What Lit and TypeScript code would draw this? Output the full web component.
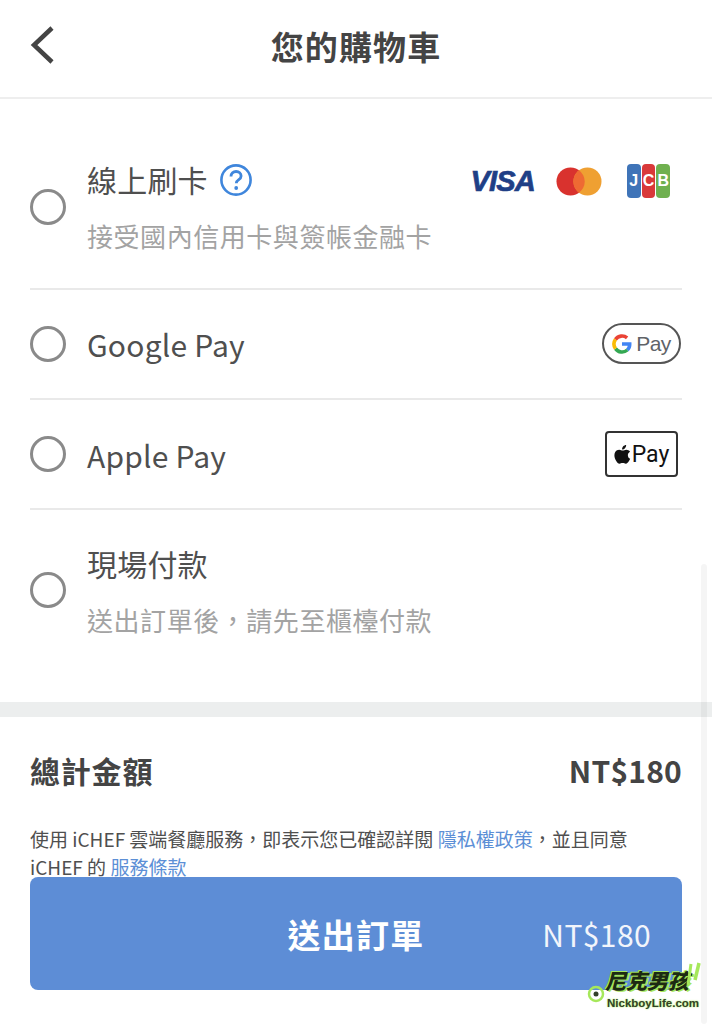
import { LitElement, html, css } from "lit";
import { customElement } from "lit/decorators.js";

const help = html`<svg class="help" width="34" height="34" viewBox="0 0 34 34" fill="none">
  <circle cx="17" cy="17" r="14.6" stroke="#3f86dc" stroke-width="2.6"/>
  <path d="M12 13.4c0-3 2.3-4.9 5.1-4.9 2.9 0 5 1.8 5 4.4 0 2-1.1 3-2.6 4-1.4.9-2.2 1.600-2.200 3.400" stroke="#3f86dc" stroke-width="2.800"/>
  <circle cx="17.200" cy="25" r="1.900" fill="#3f86dc"/>
</svg>`;

const cards = html`<div class="cards">
  <span class="visa">VISA</span>
  <svg class="mc" width="46" height="29" viewBox="0 0 46 29">
    <circle cx="14.500" cy="14.500" r="14" fill="#d9322e"/>
    <circle cx="31.500" cy="14.500" r="14" fill="#efa032"/>
    <path d="M23 3.200a14 14 0 0 1 0 22.600a14 14 0 0 1 0-22.600z" fill="#ee6a33"/>
  </svg>
  <div class="jcb">
    <span class="j">J</span><span class="c">C</span><span class="b">B</span>
  </div>
</div>`;

const gpay = html`<div class="gpay">
  <svg width="20" height="20" viewBox="0 0 20 20" fill="none" stroke-width="3.600">
    <path d="M10 10h7.700a8 8 0 0 1-2.400 6" stroke="#4285f4"/>
    <path d="M15.300 16a8 8 0 0 1-11.800-1.400" stroke="#34a853"/>
    <path d="M3.500 14.600a8 8 0 0 1 0-9.200" stroke="#fbbc05"/>
    <path d="M3.500 5.400a8 8 0 0 1 11.600-1.500" stroke="#ea4335"/>
  </svg>
  <span>Pay</span>
</div>`;

const apay = html`<div class="apay">
  <svg width="17" height="20" viewBox="0 0 18 22" fill="#111">
    <path d="M13 1c.1 1.500-.5 2.700-1.300 3.600-.8.900-2 1.500-3.100 1.400C8.400 4.600 9 3.300 9.800 2.500 10.600 1.600 12 1 13 1z"/>
    <path d="M17.400 16.200c-.5 1.100-.7 1.600-1.300 2.500-.9 1.300-2 2.900-3.500 3-1.300 0-1.700-.8-3.400-.8-1.800 0-2.200.8-3.500.8-1.500-.1-2.500-1.500-3.400-2.800C-.2 15.300-.5 11 1 8.800 2 7.200 3.700 6.300 5.300 6.300c1.600 0 2.700.9 4 .9 1.300 0 2.100-.9 4-.9 1.400 0 3 .8 4 2.100-3.500 1.900-2.900 6.800.1 7.800z"/>
  </svg>
  <span>Pay</span>
</div>`;

@customElement("app-root")
export class AppRoot extends LitElement {
  static styles = css`
    :host {
      display: block;
      position: relative;
      width: 712px;
      height: 1024px;
      overflow: hidden;
      background: #fff;
      color: #4a4a4a;
      font-family: "Noto Sans CJK TC", "Noto Sans", sans-serif;
    }
    .header {
      height: 99px;
      box-sizing: border-box;
      border-bottom: 2px solid #eeeeee;
      display: flex;
      align-items: center;
      justify-content: center;
      position: relative;
      padding-bottom: 5px;
    }
    .back {
      position: absolute;
      left: 29px;
      top: 25px;
    }
    .title {
      font-size: 33px;
      font-weight: 700;
      line-height: 40px;
      letter-spacing: 1.100px;
      color: #444;
    }
    .list {
      padding: 0 30px;
    }
    .row {
      display: flex;
      align-items: center;
      border-bottom: 2px solid #e9e9e9;
      box-sizing: border-box;
    }
    .row.last { border-bottom: none; }
    .r1 { height: 191px; padding-top: 26px; }
    .r2, .r3 { height: 110px; }
    .r4 { height: 192px; padding-bottom: 32px; }
    .radio {
      width: 36px;
      height: 36px;
      box-sizing: border-box;
      border: 3.500px solid #8a8a8a;
      border-radius: 50%;
      flex: none;
      margin-right: 21px;
    }
    .body { flex: 1; min-width: 0; }
    .name {
      font-size: 30px;
      line-height: 40px;
      letter-spacing: 0.2px;
      color: #4f4f4f;
      display: flex;
      align-items: center;
      gap: 11px;
    }
    .r3 .name { margin-top: 1px; }
    .sub {
      font-size: 26px;
      line-height: 36px;
      margin-top: 19px;
      letter-spacing: 0.55px;
      color: #a3a3a3;
    }
    .help { flex: none; margin-top: 2px; }
    .cards {
      display: flex;
      align-items: center;
      align-self: flex-start;
      margin-top: 39px;
      margin-right: 12px;
    }
    .visa {
      font-family: "Liberation Sans", sans-serif;
      font-size: 29px;
      font-weight: 700;
      font-style: italic;
      letter-spacing: -0.8px;
      line-height: 30px;
      color: #1f3f86;
      -webkit-text-stroke: 0.7px #1f3f86;
    }
    .mc { margin-left: 21px; }
    .jcb {
      display: flex;
      gap: 1px;
      height: 34px;
      margin-left: 25px;
    }
    .jcb span {
      width: 13.700px;
      border-radius: 4px;
      color: #fff;
      font-family: "Liberation Sans", sans-serif;
      font-size: 16px;
      font-weight: 700;
      line-height: 34px;
      text-align: center;
    }
    .j { background: #3f74b8; }
    .c { background: #d9393a; }
    .b { background: #6fb04f; }
    .gpay {
      width: 79px;
      height: 41px;
      box-sizing: border-box;
      border: 2px solid #555;
      border-radius: 21px;
      display: flex;
      align-items: center;
      justify-content: center;
      gap: 4px;
      margin-right: 1px;
      margin-top: -1px;
      font-family: "Liberation Sans", sans-serif;
      font-size: 21px;
      letter-spacing: -0.5px;
      color: #5f6368;
    }
    .apay {
      width: 73px;
      height: 46px;
      box-sizing: border-box;
      border: 2px solid #333;
      border-radius: 4px;
      display: flex;
      align-items: center;
      justify-content: center;
      gap: 1px;
      margin-right: 4px;
      font-family: Roboto, sans-serif;
      font-weight: 400;
      font-size: 23px;
      color: #111;
    }
    .band {
      height: 15px;
      background: #eceeee;
    }
    .summary {
      padding: 0 30px;
    }
    .total {
      display: flex;
      justify-content: space-between;
      align-items: center;
      height: 40px;
      margin-top: 33px;
      font-size: 30px;
      font-weight: 700;
      color: #444;
      letter-spacing: 0.8px;
    }
    .amount { letter-spacing: 0.2px; }
    .terms {
      height: 52px;
      margin-top: 35px;
      font-size: 19px;
      line-height: 28px;
      color: #4f4f4f;
    }
    .terms a { color: #5c8fd6; text-decoration: none; }
    .submit {
      height: 113px;
      border-radius: 8px;
      background: #5d8dd6;
      color: #fff;
      display: grid;
      grid-template-columns: 1fr auto 1fr;
      align-items: center;
      padding: 0 31px;
      position: relative;
    }
    .submit b {
      grid-column: 2;
      font-size: 33px;
      font-weight: 700;
      letter-spacing: 1.300px;
    }
    .submit span {
      grid-column: 3;
      justify-self: end;
      font-size: 30px;
      letter-spacing: 0.4px;
      color: #f2f5fb;
    }
    .scroll {
      position: absolute;
      right: 5px;
      top: 564px;
      bottom: 0;
      width: 6px;
      border-radius: 3px;
      background: rgba(0, 0, 0, 0.04);
    }
    .mark {
      position: absolute;
      left: 586px;
      top: 962px;
      width: 120px;
      height: 50px;
    }
    .mark .cn {
      position: absolute;
      left: 19px;
      top: 5px;
      font-size: 21px;
      line-height: 26px;
      font-weight: 900;
      font-style: italic;
      color: #1c2a12;
      text-shadow: 2px 1px 0 #a6e85a, -1px -1px 0 #a6e85a;
      white-space: nowrap;
    }
    .mark .en {
      position: absolute;
      left: 21px;
      top: 35px;
      font-family: "Liberation Sans", sans-serif;
      font-size: 11.500px;
      line-height: 13px;
      font-weight: 700;
      color: #33412a;
      text-shadow: 0 0 2px #b6ee70, 0 0 1px #b6ee70;
      white-space: nowrap;
    }
    .mark svg { position: absolute; }
    .pin { left: 1px; top: 22px; }
    .fork { left: 100px; top: 0; }
  `;

  render() {
    return html`
      <div class="header">
        <svg class="back" width="26" height="40" viewBox="0 0 26 40" fill="none">
          <path d="M23 3 5 20l18 17" stroke="#444" stroke-width="4.500"/>
        </svg>
        <div class="title">您的購物車</div>
      </div>
      <div class="list">
        <div class="row r1">
          <div class="radio"></div>
          <div class="body">
            <div class="name">線上刷卡 ${help}</div>
            <div class="sub">接受國內信用卡與簽帳金融卡</div>
          </div>
          ${cards}
        </div>
        <div class="row r2">
          <div class="radio"></div>
          <div class="body"><div class="name">Google Pay</div></div>
          ${gpay}
        </div>
        <div class="row r3">
          <div class="radio"></div>
          <div class="body"><div class="name">Apple Pay</div></div>
          ${apay}
        </div>
        <div class="row r4 last">
          <div class="radio"></div>
          <div class="body">
            <div class="name">現場付款</div>
            <div class="sub">送出訂單後，請先至櫃檯付款</div>
          </div>
        </div>
      </div>
      <div class="band"></div>
      <div class="summary">
        <div class="total"><div>總計金額</div><div class="amount">NT$180</div></div>
        <div class="terms">使用 iCHEF 雲端餐廳服務，即表示您已確認詳閱 <a>隱私權政策</a>，並且同意<br />iCHEF 的 <a>服務條款</a></div>
        <div class="submit"><b>送出訂單</b><span>NT$180</span></div>
      </div>
      <div class="scroll"></div>
      <div class="mark">
        <svg class="pin" width="18" height="24" viewBox="0 0 18 24" fill="none">
          <circle cx="9" cy="10" r="7" stroke="#a6e85a" stroke-width="2.500"/>
          <circle cx="9" cy="10" r="2.500" fill="#33412a"/>
        </svg>
        <div class="cn">尼克男孩</div>
        <div class="en">NickboyLife.com</div>
        <svg class="fork" width="16" height="26" viewBox="0 0 16 26" fill="none">
          <path d="M5 2 2 23" stroke="#a6e85a" stroke-width="3"/>
          <path d="M13 1 9 18" stroke="#a6e85a" stroke-width="3.500"/>
        </svg>
      </div>
    `;
  }
}
